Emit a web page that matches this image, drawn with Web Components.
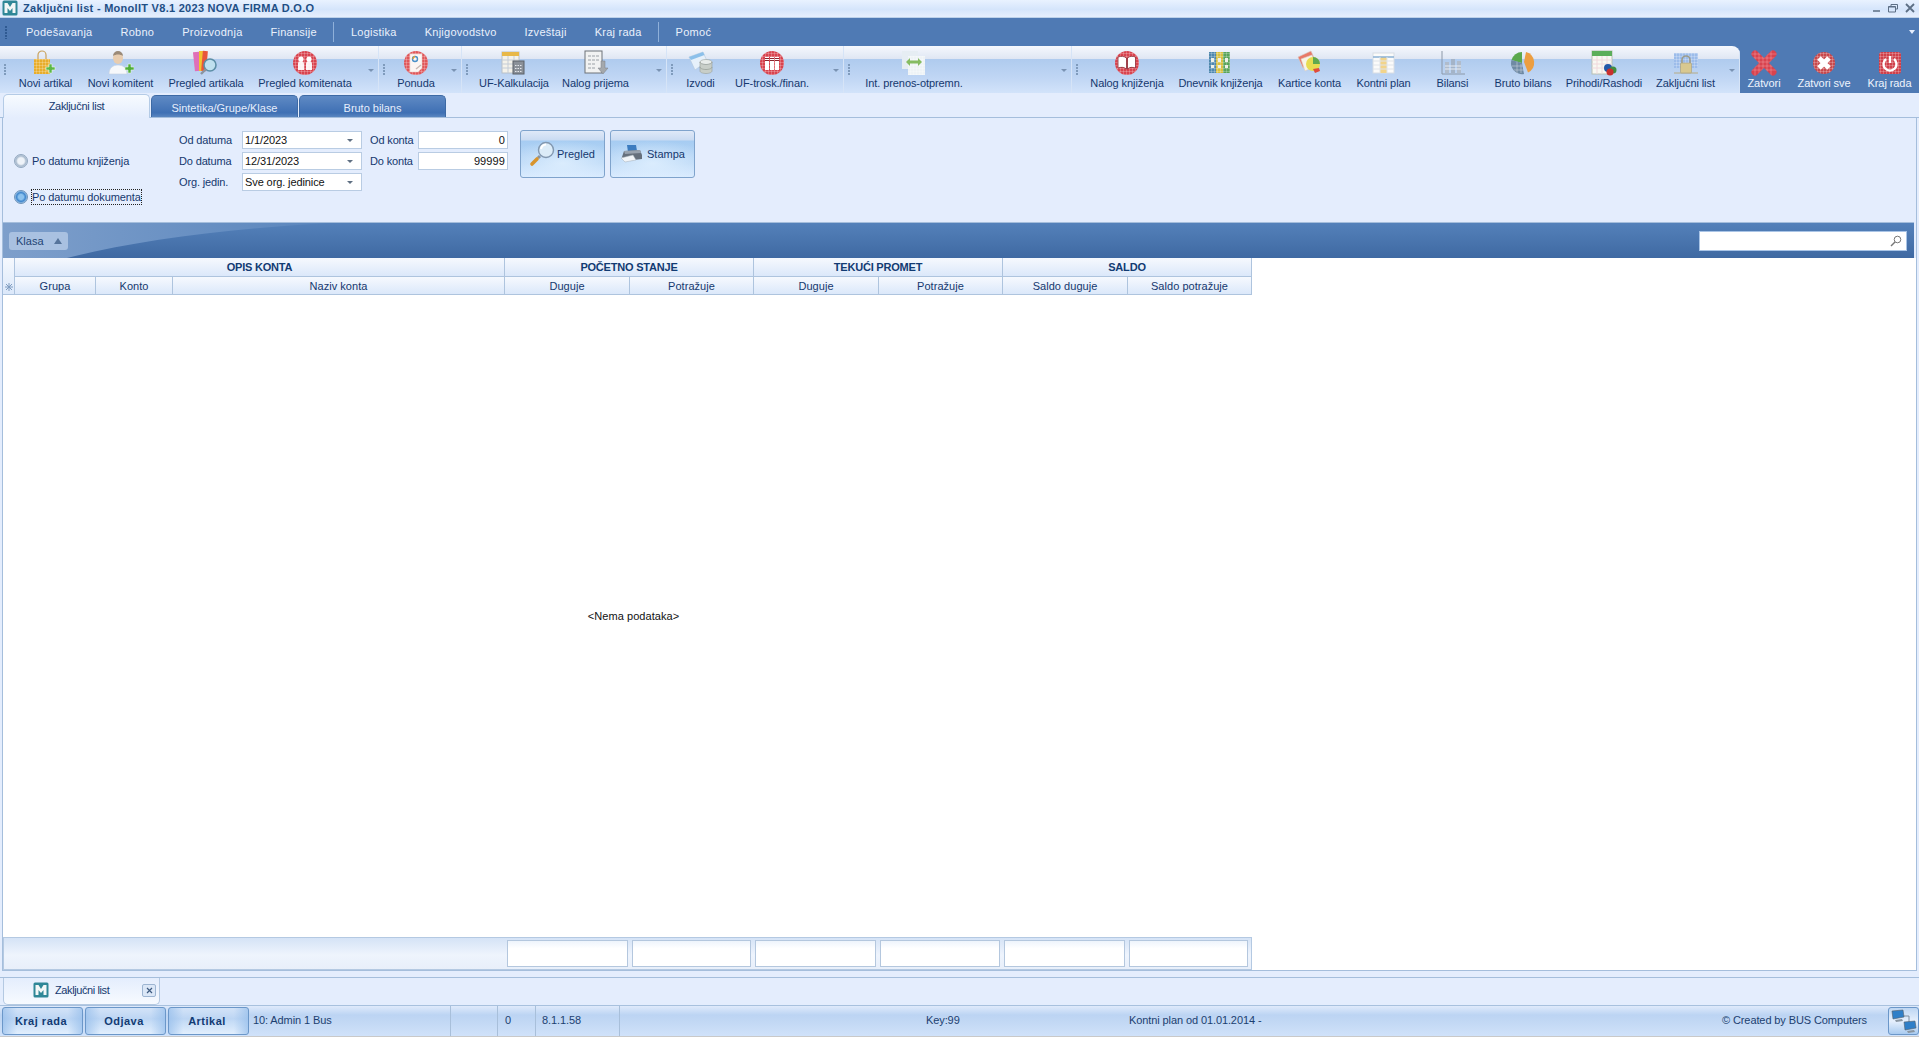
<!doctype html>
<html>
<head>
<meta charset="utf-8">
<title>Zaključni list</title>
<style>
  html, body { margin: 0; padding: 0; background: #e4edfd; overflow: hidden; }
  body { font: 11px "Liberation Sans", Arial, sans-serif; color: #15386e; }
</style>
</head>
<body>
<mono-app>
  <title-bar>Zaključni list - MonolIT V8.1 2023 NOVA FIRMA D.O.O</title-bar>
  <menu-bar>
    <menu-item>Podešavanja</menu-item>
    <menu-item>Robno</menu-item>
    <menu-item>Proizvodnja</menu-item>
    <menu-item sep>Finansije</menu-item>
    <menu-item>Logistika</menu-item>
    <menu-item>Knjigovodstvo</menu-item>
    <menu-item>Izveštaji</menu-item>
    <menu-item sep>Kraj rada</menu-item>
    <menu-item>Pomoć</menu-item>
  </menu-bar>
  <tool-bar>
    <tool-group w="379" first>
      <tool-item w="69" icon="bag">Novi artikal</tool-item>
      <tool-item w="81" icon="user">Novi komitent</tool-item>
      <tool-item w="90" icon="books">Pregled artikala</tool-item>
      <tool-item w="108" icon="people">Pregled komitenata</tool-item>
    </tool-group>
    <tool-group w="83">
      <tool-item w="52" icon="offer">Ponuda</tool-item>
    </tool-group>
    <tool-group w="205">
      <tool-item w="82" icon="calc">UF-Kalkulacija</tool-item>
      <tool-item w="81" icon="receipt">Nalog prijema</tool-item>
    </tool-group>
    <tool-group w="177">
      <tool-item w="45" icon="db">Izvodi</tool-item>
      <tool-item w="98" icon="binders">UF-trosk./finan.</tool-item>
    </tool-group>
    <tool-group w="228">
      <tool-item w="118" icon="transfer">Int. prenos-otpremn.</tool-item>
    </tool-group>
    <tool-group w="668">
      <tool-item w="88" icon="book">Nalog knjiženja</tool-item>
      <tool-item w="99" icon="journal">Dnevnik knjiženja</tool-item>
      <tool-item w="79" icon="cards">Kartice konta</tool-item>
      <tool-item w="69" icon="plan">Kontni plan</tool-item>
      <tool-item w="69" icon="bars">Bilansi</tool-item>
      <tool-item w="72" icon="pie">Bruto bilans</tool-item>
      <tool-item w="90" icon="calendar">Prihodi/Rashodi</tool-item>
      <tool-item w="73" icon="lock">Zaključni list</tool-item>
    </tool-group>
    <tool-item slot="exit" light w="48" icon="close">Zatvori</tool-item>
    <tool-item slot="exit" light w="72" icon="closeall">Zatvori sve</tool-item>
    <tool-item slot="exit" light w="59" icon="power">Kraj rada</tool-item>
  </tool-bar>
  <tab-strip>
    <tab-item active>Zaključni list</tab-item>
    <tab-item>Sintetika/Grupe/Klase</tab-item>
    <tab-item>Bruto bilans</tab-item>
  </tab-strip>
  <content-panel>
    <filter-form>
      <radio-option slot="radios">Po datumu knjiženja</radio-option>
      <radio-option slot="radios" checked>Po datumu dokumenta</radio-option>
      <field-label>Od datuma</field-label>
      <combo-box>1/1/2023</combo-box>
      <field-label inset>Od konta</field-label>
      <num-input>0</num-input>
      <field-label>Do datuma</field-label>
      <combo-box>12/31/2023</combo-box>
      <field-label inset>Do konta</field-label>
      <num-input>99999</num-input>
      <field-label>Org. jedin.</field-label>
      <combo-box>Sve org. jedinice</combo-box>
      <big-button slot="buttons" icon="lens">Pregled</big-button>
      <big-button slot="buttons" icon="printer">Stampa</big-button>
    </filter-form>
    <group-band>Klasa</group-band>
    <data-grid empty="<Nema podataka>"></data-grid>
  </content-panel>
  <doc-tabs>Zaključni list</doc-tabs>
  <status-bar>
    <status-button>Kraj rada</status-button>
    <status-button>Odjava</status-button>
    <status-button>Artikal</status-button>
    <status-cell w="200" pad="2" line>10: Admin 1 Bus</status-cell>
    <status-cell w="47" line></status-cell>
    <status-cell w="38" pad="7" line>0</status-cell>
    <status-cell w="84" pad="6" line>8.1.1.58</status-cell>
    <status-cell w="509" pad="306">Key:99</status-cell>
    <status-cell w="593">Kontni plan od 01.01.2014 -</status-cell>
    <status-cell w="166">© Created by BUS Computers</status-cell>
    <net-button></net-button>
  </status-bar>
</mono-app>

<script>
const grid = `<defs><pattern id="g" width="3" height="3" patternUnits="userSpaceOnUse"><path d="M0 .5H3M.5 0V3" stroke="#fff" stroke-opacity=".22" fill="none"/></pattern></defs>`;
const red = (inner) => `${grid}<circle cx="13" cy="13" r="12" fill="#d8434e"/><circle cx="13" cy="13" r="12" fill="url(#g)"/>${inner}`;
const plus = `<path d="M20 14h3v3h3v3h-3v3h-3v-3h-3v-3h3z" fill="#4fae3a" stroke="#e9f5e2" stroke-width=".6"/>`;

const ICONS = {
  bag: `${grid}<path d="M5 9V5a4 4 0 0 1 8 0v4" fill="none" stroke="#c9a25c" stroke-width="1.2"/><rect x="1" y="9" width="16" height="15" fill="#e8ad2c"/><rect x="1" y="9" width="16" height="15" fill="url(#g)"/><path d="M15 17h3v3h3v3h-3v3h-3v-3h-3v-3h3z" transform="translate(1 -3)" fill="#5cb848" stroke="#e9f5e2" stroke-width=".6"/>`,
  user: `<ellipse cx="10" cy="8" rx="5" ry="6" fill="#e8cdb0"/><path d="M5 6a5 5 0 0 1 10 0c-3-2-7-2-10 0z" fill="#9b8a78"/><path d="M1 24c0-6 4-9 9-9s9 3 9 9z" fill="#f6f8fb" stroke="#c6d2e0" stroke-width=".6"/>${plus}`,
  books: `<rect x="1" y="2" width="6" height="19" fill="#e070b8" transform="rotate(-6 4 12)"/><rect x="6" y="1" width="4" height="20" fill="#f2c230"/><rect x="9" y="1" width="5" height="20" fill="#e8553c" transform="rotate(5 11 11)"/><circle cx="17" cy="15" r="6" fill="#bfe0ef" stroke="#5c8ea6" stroke-width="1.6"/><path d="M13 19l-5 5" stroke="#8a94a0" stroke-width="2.4"/>`,
  people: red(`<circle cx="9" cy="9" r="2.6" fill="#fff"/><circle cx="17" cy="9" r="2.6" fill="#fff"/><path d="M6 20v-6a3 3 0 0 1 6 0v6zM14 20v-6a3 3 0 0 1 6 0v6z" fill="#fff" opacity=".92"/>`),
  offer: `${grid}<circle cx="13" cy="13" r="12" fill="#e0575a"/><circle cx="13" cy="13" r="12" fill="url(#g)"/><path d="M7 4h12v14l-4 4H7z" fill="#fdf6f3" stroke="#e2c9c4" stroke-width=".5"/><circle cx="12" cy="9" r="2.5" fill="none" stroke="#4a90c8" stroke-width="1.4"/><path d="M10 9a2.5 2.5 0 0 1 2-2.5" stroke="#e8a030" stroke-width="1.4" fill="none"/><path d="M13 19l5-4" stroke="#c9b8b4" stroke-width="1.4"/>`,
  calc: `<rect x="1" y="2" width="17" height="21" fill="#f4f2ea" stroke="#b8c0c8"/><rect x="1" y="2" width="17" height="4" fill="#e8b848"/><path d="M1 10h17M1 14h17M1 18h17M7 6v17M13 6v17" stroke="#c4ccd6"/><rect x="12" y="11" width="11" height="13" fill="#8a9098" stroke="#5a6068"/><path d="M14 15.500h7M14 18.500h7M14 21.500h7" stroke="#e4e6ea" stroke-dasharray="1.500 1"/>`,
  receipt: `<rect x="2" y="1" width="17" height="22" fill="#f1f2f2" stroke="#6c7278"/><path d="M5 6h11M5 10h11M5 14h7M5 18h7" stroke="#9aa0a6" stroke-dasharray="3 1"/><path d="M18 11h4v7h3l-5 6-5-6h3z" fill="#a4a8ac" stroke="#7a7e84" stroke-width=".5"/>`,
  db: `<path d="M1 7l14-5 4 9-12 9z" fill="#e6f0fa" stroke="#b4c8dc" stroke-width=".6"/><path d="M1 7l14-5 1.500 3L3 10z" fill="#8cc0ea"/><ellipse cx="18" cy="12" rx="6" ry="2.500" fill="#e8ecea" stroke="#98a098" stroke-width=".6"/><path d="M12 12v9c0 1.500 2.700 2.500 6 2.500s6-1 6-2.500v-9c0 1.500-2.700 2.500-6 2.500s-6-1-6-2.500z" fill="#c8cec8" stroke="#98a098" stroke-width=".6"/><path d="M12 17c0 1.500 2.700 2.500 6 2.500s6-1 6-2.500" fill="none" stroke="#8a928a" stroke-width=".6"/>`,
  binders: red(`<rect x="6" y="7" width="4" height="13" fill="#fff"/><rect x="11" y="7" width="4" height="13" fill="#fff"/><rect x="16" y="7" width="4" height="13" fill="#fff"/><path d="M6 8.500h4M11 8.500h4M16 8.500h4M6 10.500h4M11 10.500h4M16 10.500h4" stroke="#8a2630"/>`),
  transfer: `${grid}<rect x="1" y="1" width="16" height="18" fill="#e6edf3"/><rect x="7" y="6" width="17" height="19" fill="#eef3f6"/><rect x="7" y="6" width="17" height="19" fill="url(#g)"/><path d="M5 12l4-4v2.500h8V8l4 4-4 4v-2.500H9V16z" fill="#86bc62"/>`,
  book: red(`<path d="M4 7c3-1 6-1 8.500 1v11C10 17 7 17 4 18zM21.500 7c-3-1-6-1-8 1v11c2-2 5-2 8-1z" fill="#fff" stroke="#8a2630" stroke-width=".8"/>`),
  journal: `${grid}<rect x="1" y="2" width="7" height="21" fill="#4f88ae"/><rect x="8" y="2" width="7" height="21" fill="#d8c040"/><rect x="15" y="2" width="7" height="21" fill="#5aa45a"/><rect x="1" y="2" width="21" height="21" fill="url(#g)"/><path d="M3 8h3v4H3zM10 8h3v4h-3zM17 8h3v4h-3zM3 15h3v3H3zM10 15h3v3h-3zM17 15h3v3h-3z" fill="#eef0e8"/>`,
  cards: `<path d="M1 7l13-6 5 11-13 6z" fill="#e87868" stroke="#d8ccc4" stroke-width=".6"/><path d="M4 9l11-4 4 11-11 5z" fill="#f8f4e6" stroke="#d8ccc4" stroke-width=".6"/><circle cx="16" cy="14" r="7" fill="#e8dc50"/><path d="M16 14V7a7 7 0 0 1 7 7z" fill="#60a850"/><path d="M16 19l6-1 1 3-5 2z" fill="#e04c3c"/>`,
  plan: `<rect x="2" y="3" width="21" height="20" fill="#fbfbfa" stroke="#d8dde4"/><rect x="9" y="7" width="7" height="16" fill="#f2d48a"/><path d="M2 7h21" stroke="#8ab0d4" stroke-width="1.500"/><path d="M2 11h21M2 15h21M2 19h21M9 7v16M16 7v16" stroke="#dfe4ea"/>`,
  bars: `<path d="M2 1v23h23" fill="none" stroke="#8c98a8"/><rect x="5" y="12" width="4" height="11" fill="#b0bccc"/><rect x="11" y="9" width="4" height="14" fill="#a4b4c8"/><rect x="17" y="11" width="4" height="12" fill="#b0bccc"/><path d="M5 16h16M5 19h16" stroke="#e6ecf4"/>`,
  pie: `<path d="M12 13V2A11 11 0 0 0 1.500 10z" fill="#5aa84c"/><path d="M12 13L1.500 10A11 11 0 0 0 14 24z" fill="#6f8aa4"/><path d="M14 12l2-10a11 11 0 0 1 2 20.500z" fill="#ec9e40"/><path d="M2 16h11M4 20h10M7 12v11M11 14v9" stroke="#c8d2dc" stroke-width=".6"/>`,
  calendar: `<rect x="1" y="1" width="20" height="23" fill="#f8f8f2" stroke="#b8c0b4"/><rect x="1" y="1" width="20" height="5" fill="#5cae5a"/><path d="M1 10h20M1 14h20M1 18h20M6 6v18M11 6v18M16 6v18" stroke="#f0d8dc"/><circle cx="17" cy="18" r="4" fill="#2458a8"/><circle cx="22" cy="20" r="3.500" fill="#408c40"/><circle cx="19" cy="22" r="3.500" fill="#c83030"/>`,
  lock: `${grid}<rect x="1" y="3" width="24" height="15" fill="#9cbcea"/><rect x="1" y="3" width="24" height="15" fill="url(#g)"/><path d="M1 23h24" stroke="#b8b8a8" stroke-width="1.500"/><path d="M9 13V10a4 4 0 0 1 8 0v3" fill="none" stroke="#9c9c8c" stroke-width="1.600"/><rect x="7.500" y="13" width="11" height="10" rx="1" fill="#d8c890" stroke="#a49c78" stroke-width=".6"/>`,
  close: `<defs><mask id="m"><path d="M4 4l18 18M22 4L4 22" stroke="#fff" stroke-width="7" stroke-linecap="round"/></mask></defs><path d="M4 4l18 18M22 4L4 22" stroke="#d8434e" stroke-width="7" stroke-linecap="round"/><g mask="url(#m)"><path d="M0 4h26M0 8h26M0 12h26M0 16h26M0 20h26M4 0v26M8 0v26M12 0v26M16 0v26M20 0v26" stroke="#f4b0b6" stroke-opacity=".4"/></g>`,
  closeall: `${grid}<circle cx="13" cy="13" r="11" fill="#c8484c"/><circle cx="13" cy="13" r="11" fill="url(#g)"/><path d="M8 8l10 10M18 8L8 18" stroke="#fff" stroke-width="5"/>`,
  power: `${grid}<rect x="2" y="2" width="22" height="22" rx="3" fill="#d0404a"/><rect x="2" y="2" width="22" height="22" rx="3" fill="url(#g)"/><path d="M9 9a6.500 6.500 0 1 0 8 0" fill="none" stroke="#fff" stroke-width="2.400"/><path d="M13 6v7" stroke="#fff" stroke-width="2.400"/>`,
  lens: `<circle cx="17" cy="9" r="7.500" fill="#dcecf8" stroke="#8298b0" stroke-width="1.400"/><path d="M12 8a5.500 5.500 0 0 1 5-4.500" stroke="#fff" stroke-width="2" fill="none"/><path d="M11 15l-2 2" stroke="#8c949c" stroke-width="3"/><path d="M8 18l-5 5" stroke="#d8942c" stroke-width="3.600" stroke-linecap="round"/>`,
  printer: `<path d="M8 4h9l1 6-9 1z" fill="#3c7cc0"/><path d="M5 10l16-1 2 5v4L6 20l-3-4z" fill="#66707c"/><path d="M5 10l16-1 1 3-16 1z" fill="#98a2ae"/><path d="M2 17l12-3 3 5-11 2z" fill="#f2f5f8" stroke="#a4aeb8" stroke-width=".5"/>`,
  logo: `<rect x=".5" y=".5" width="15" height="15" rx="1.500" fill="#2f8797"/><path d="M2.500 13V3h3l2.500 4 2.500-4h3v10h-3V8L8 11 5.500 8v5z" fill="#f3f7f7"/>`,
};

class MonoApp extends HTMLElement {
  constructor() {
    super();
    this.attachShadow({ mode: "open" }).innerHTML = `
      <style>:host { display: flex; flex-direction: column; width: 1919px; height: 1037px; overflow: hidden; background: #e4edfd; }</style>
      <slot></slot>`;
  }
}

class TitleBar extends HTMLElement {
  constructor() {
    super();
    this.attachShadow({ mode: "open" }).innerHTML = `
      <style>
        :host { display: flex; align-items: center; height: 18px; flex: none; box-sizing: border-box; padding: 0 4px 1px 2px;
          background: linear-gradient(#e9f2ff, #d5e5fb 55%, #e6effd); border-bottom: 1px solid #bcd1ea; }
        svg { display: block; margin-right: 5px; }
        .t { flex: 1; font-weight: bold; font-size: 11px; color: #1f4f85; letter-spacing: .28px; }
        .c { display: flex; gap: 7px; color: #5d6f85; align-items: center; }
      </style>
      <svg width="16" height="16" viewBox="0 0 16 16">${ICONS.logo}</svg>
      <div class="t"><slot></slot></div>
      <div class="c">
        <svg style="margin:0" width="9" height="9" viewBox="0 0 9 9"><path d="M1 7h7" stroke="#5d6f85" stroke-width="1.500"/></svg>
        <svg style="margin:0" width="10" height="9" viewBox="0 0 10 9"><path d="M3 2V.5h6.500V5H8M.5 2.500h7V8H.5z M.5 3h7" fill="none" stroke="#5d6f85"/></svg>
        <svg style="margin:0" width="10" height="10" viewBox="0 0 10 10"><path d="M1 1l8 8M9 1L1 9" stroke="#5d6f85" stroke-width="1.800"/></svg>
      </div>`;
  }
}

class MenuBar extends HTMLElement {
  constructor() {
    super();
    this.attachShadow({ mode: "open" }).innerHTML = `
      <style>
        :host { position: relative; display: flex; align-items: center; height: 28px; flex: none; box-sizing: border-box; padding-left: 12px; background: #4f7ab4; }
        .grip { position: absolute; left: 5px; top: 8px; width: 2px; height: 13px; background: radial-gradient(circle at 1px 1px, #2f5a92 1px, transparent 1px) 0 0 / 2px 3px; }
        .more { position: absolute; right: 4px; top: 12px; border: 3px solid transparent; border-top: 4px solid #e4edfd; border-bottom: 0; }
      </style>
      <span class="grip"></span><slot></slot><span class="more"></span>`;
  }
}

class MenuItem extends HTMLElement {
  constructor() {
    super();
    this.attachShadow({ mode: "open" }).innerHTML = `
      <style>
        :host { display: flex; align-items: center; height: 100%; padding: 0 14px; color: #eaf1fc; letter-spacing: .26px; white-space: nowrap; }
        :host([sep]) { margin-right: 3px; padding-right: 17px; background: linear-gradient(#8fb0d9, #8fb0d9) right 4px / 1px 20px no-repeat; }
      </style><slot></slot>`;
  }
}

class ToolBar extends HTMLElement {
  constructor() {
    super();
    this.attachShadow({ mode: "open" }).innerHTML = `
      <style>
        :host { display: flex; height: 47px; flex: none; background: #4f7ab4; }
        .main { display: flex; width: 1740px; border-radius: 0 8px 0 0; overflow: hidden;
          background: linear-gradient(#f5f8fd, #dfe6f3 13px, #afcbee 13px, #c0d6f4 32px, #d2e3fa); }
        .exit { display: flex; }
      </style>
      <div class="main"><slot></slot></div>
      <div class="exit"><slot name="exit"></slot></div>`;
  }
}

class ToolGroup extends HTMLElement {
  constructor() {
    super();
    this.attachShadow({ mode: "open" }).innerHTML = `
      <style>
        :host { position: relative; display: flex; flex: none; box-sizing: border-box; padding-left: 11px; height: 100%; border-right: 1px solid #d6e4f7; }
        .grip { position: absolute; left: 4px; top: 18px; width: 2px; height: 12px; background: radial-gradient(circle at 1px 1px, #7f9bbc 1px, transparent 1px) 0 0 / 2px 3px; }
        .chev { position: absolute; right: 4px; top: 23px; border: 3px solid transparent; border-top: 3px solid #7a93b3; border-bottom: 0; }
      </style>
      <span class="grip"></span><slot></slot><span class="chev"></span>`;
    this.style.width = this.getAttribute("w") + "px";
  }
}

class ToolItem extends HTMLElement {
  constructor() {
    super();
    const svg = ICONS[this.getAttribute("icon")];
    this.attachShadow({ mode: "open" }).innerHTML = `
      <style>
        :host { display: flex; flex-direction: column; align-items: center; flex: none; height: 47px; box-sizing: border-box; padding-top: 4px; white-space: nowrap; color: #15386e; letter-spacing: -.08px; }
        :host([light]) { color: #eef4fd; }
        svg { display: block; margin-bottom: 1px; }
      </style>
      <svg width="26" height="26" viewBox="0 0 26 26">${svg}</svg>
      <slot></slot>`;
    this.style.width = this.getAttribute("w") + "px";
  }
}

class TabStrip extends HTMLElement {
  constructor() {
    super();
    this.attachShadow({ mode: "open" }).innerHTML = `
      <style>:host { display: flex; align-items: flex-end; gap: 1px; height: 25px; flex: none; box-sizing: border-box; padding-left: 3px; border-bottom: 1px solid #a5bedc; }</style>
      <slot></slot>`;
  }
}

class TabItem extends HTMLElement {
  constructor() {
    super();
    this.attachShadow({ mode: "open" }).innerHTML = `
      <style>
        :host { display: flex; align-items: center; justify-content: center; width: 147px; height: 22px; box-sizing: border-box; padding-top: 2px;
          border: 1px solid #3d6aa5; border-bottom: 0; border-radius: 5px 5px 0 0; color: #e6eefc; letter-spacing: -.02px;
          background: linear-gradient(#5f8ac4, #3f70b4 80%, #5a86c0); }
        :host([active]) { height: 24px; margin-bottom: -1px; color: #15386e; border-color: #b4cbe6; background: linear-gradient(#f7fbff, #e4edfd); padding: 0 0 2px; letter-spacing: -.3px; }
      </style><slot></slot>`;
  }
}

class ContentPanel extends HTMLElement {
  constructor() {
    super();
    this.attachShadow({ mode: "open" }).innerHTML = `
      <style>:host { display: flex; flex-direction: column; height: 853px; flex: none; box-sizing: border-box; margin: 0 2px; border: 1px solid #a5bedc; border-top: 0; }</style>
      <slot></slot>`;
  }
}

class FilterForm extends HTMLElement {
  constructor() {
    super();
    this.attachShadow({ mode: "open" }).innerHTML = `
      <style>
        :host { display: flex; height: 104px; flex: none; box-sizing: border-box; }
        .radios { width: 176px; box-sizing: border-box; padding: 35px 0 0 11px; display: flex; flex-direction: column; gap: 20px; }
        .fields { display: grid; grid-template-columns: 63px 120px 56px 90px; grid-auto-rows: 18px; row-gap: 3px; padding-top: 13px; align-content: start; }
        .buttons { display: flex; gap: 5px; margin-left: 12px; padding-top: 12px; align-items: flex-start; }
      </style>
      <div class="radios"><slot name="radios"></slot></div>
      <div class="fields"><slot></slot></div>
      <div class="buttons"><slot name="buttons"></slot></div>`;
  }
}

class RadioOption extends HTMLElement {
  constructor() {
    super();
    this.attachShadow({ mode: "open" }).innerHTML = `
      <style>
        :host { display: flex; align-items: center; height: 16px; gap: 4px; white-space: nowrap; letter-spacing: -.1px; }
        i { width: 14px; height: 14px; border-radius: 50%; box-sizing: border-box; border: 1px solid #92a8c0; background: radial-gradient(#eef3f9 38%, #a8bace 60%, #dfe7f1 85%); }
        :host([checked]) i { background: radial-gradient(#8cc2ee 30%, #3f86cc 52%, #b7d6f2 78%); border-color: #6f93b8; }
        span { display: block; padding: 1px 0; }
        :host([checked]) span { outline: 1px dotted #222; outline-offset: 0; }
      </style>
      <i></i><span><slot></slot></span>`;
  }
}

class FieldLabel extends HTMLElement {
  constructor() {
    super();
    this.attachShadow({ mode: "open" }).innerHTML = `
      <style>
        :host { display: flex; align-items: center; white-space: nowrap; letter-spacing: -.15px; }
        :host([inset]) { padding-left: 8px; }
      </style><slot></slot>`;
  }
}

class ComboBox extends HTMLElement {
  constructor() {
    super();
    this.attachShadow({ mode: "open" }).innerHTML = `
      <style>
        :host { display: flex; align-items: center; box-sizing: border-box; padding-left: 2px; background: #fff; border: 1px solid #b9cce3; position: relative; color: #111; white-space: nowrap; letter-spacing: -.1px; }
        i { position: absolute; right: 8px; top: 7px; border: 3px solid transparent; border-top: 3px solid #5f6f82; border-bottom: 0; }
      </style><slot></slot><i></i>`;
  }
}

class NumInput extends HTMLElement {
  constructor() {
    super();
    this.attachShadow({ mode: "open" }).innerHTML = `
      <style>:host { display: flex; align-items: center; justify-content: flex-end; box-sizing: border-box; padding-right: 2px; background: #fff; border: 1px solid #b9cce3; color: #111; letter-spacing: .1px; }</style><slot></slot>`;
  }
}

class BigButton extends HTMLElement {
  constructor() {
    super();
    this.attachShadow({ mode: "open" }).innerHTML = `
      <style>
        :host { display: flex; align-items: center; gap: 2px; box-sizing: border-box; width: 85px; height: 48px; padding: 0 0 0 8px; border: 1px solid #7fa3cc; border-radius: 3px;
          background: radial-gradient(ellipse 70% 50% at 50% 70%, rgba(226,241,255,.8), rgba(226,241,255,0)),
            linear-gradient(#dfe9f8, #cadbf2 9px, #a6ccf2 10px, #bcd9f7 70%, #d9ebff); }
        svg { display: block; }
        span { margin-bottom: 1px; }
      </style>
      <svg width="26" height="26" viewBox="0 0 26 26">${ICONS[this.getAttribute("icon")]}</svg>
      <span><slot></slot></span>`;
  }
}

class GroupBand extends HTMLElement {
  constructor() {
    super();
    this.attachShadow({ mode: "open" }).innerHTML = `
      <style>
        :host { position: relative; display: flex; align-items: center; justify-content: space-between; height: 36px; flex: none; box-sizing: border-box; padding: 0 7px 0 6px; margin-right: 2px; overflow: hidden;
          border-top: 1px solid #a5bedc; background: linear-gradient(#5481ba, #3f69a2); }
        svg.sw { position: absolute; left: 0; top: 0; }
        .chip { position: relative; display: flex; align-items: center; gap: 10px; width: 59px; height: 18px; box-sizing: border-box; padding-left: 7px; border-radius: 3px; background: #a9c1e1; color: #1f4474; }
        .chip i { border: 4px solid transparent; border-bottom: 6px solid #56749b; border-top: 0; }
        .search { position: relative; display: flex; align-items: center; justify-content: flex-end; width: 208px; height: 20px; box-sizing: border-box; padding-right: 4px; background: #fff; border: 1px solid #a9c4e6; }
      </style>
      <svg class="sw" width="340" height="36" viewBox="0 0 340 36"><defs><linearGradient id="s" x1="0" x2="1"><stop offset="0" stop-color="#7e9fcb"/><stop offset="1" stop-color="#5a86bd"/></linearGradient></defs><path d="M0 0H325C220 6 130 18 60 36H0z" fill="url(#s)"/></svg>
      <div class="chip"><slot></slot><i></i></div>
      <div class="search"><svg width="12" height="12" viewBox="0 0 12 12"><circle cx="7.500" cy="4.500" r="3.300" fill="none" stroke="#777"/><path d="M5 7l-4 4" stroke="#777" stroke-width="1.400"/></svg></div>`;
  }
}

class DataGrid extends HTMLElement {
  constructor() {
    super();
    const cell = (t, span, bold) => `<div class="h${bold ? " b" : ""}" style="grid-column: span ${span}">${t}</div>`;
    this.attachShadow({ mode: "open" });
    this.shadowRoot.innerHTML = `
      <style>
        :host { display: flex; flex-direction: column; flex: 1; background: #fff; min-height: 0; }
        .head { display: grid; grid-template-columns: 12px 81px 77px 332px 125px 124px 125px 124px 125px 124px; grid-template-rows: 19px 18px; width: 1249px; flex: none; }
        .h { display: flex; align-items: center; justify-content: center; box-sizing: border-box; border-right: 1px solid #aec4de; border-bottom: 1px solid #aec4de; background: linear-gradient(#f6f9fe, #dbe8fa); color: #15386e; letter-spacing: .04px; }
        .b { font-weight: bold; color: #123b73; letter-spacing: -.2px; }
        .ind { grid-row: span 2; background: linear-gradient(#f6f9fe, #dbe8fa); border-right: 1px solid #aec4de; border-bottom: 1px solid #aec4de; display: flex; align-items: flex-end; justify-content: center; padding-bottom: 3px; box-sizing: border-box; }
        .body { flex: 1; display: flex; align-items: center; justify-content: center; width: 1237px; margin-left: 12px; color: #111; letter-spacing: .05px; }
        .foot { display: flex; gap: 4px; height: 33px; flex: none; width: 1249px; box-sizing: border-box; padding: 2px 0 0 503px; border: 1px solid #b4c9e2; background: linear-gradient(#d5e3f6, #eef4fd 55%, #e8effa); }
        .foot div { width: 120px; height: 27px; box-sizing: border-box; border: 1px solid #b4c7de; background: linear-gradient(#eef4fc, #fff 30%); }
        .foot div:nth-child(odd) { width: 121px; }
        .foot div:nth-child(2), .foot div:nth-child(6) { width: 119px; }
      </style>
      <div class="head">
        <div class="ind"><svg width="8" height="8" viewBox="0 0 8 8"><path d="M4 0v8M0 4h8M1 1l6 6M7 1L1 7" stroke="#7f9cc0"/></svg></div>
        ${cell("OPIS KONTA", 3, true)}${cell("POČETNO STANJE", 2, true)}${cell("TEKUĆI PROMET", 2, true)}${cell("SALDO", 2, true)}
        ${cell("Grupa", 1)}${cell("Konto", 1)}${cell("Naziv konta", 1)}${cell("Duguje", 1)}${cell("Potražuje", 1)}${cell("Duguje", 1)}${cell("Potražuje", 1)}${cell("Saldo duguje", 1)}${cell("Saldo potražuje", 1)}
      </div>
      <div class="body"></div>
      <div class="foot"><div></div><div></div><div></div><div></div><div></div><div></div></div>`;
    this.shadowRoot.querySelector(".body").textContent = this.getAttribute("empty");
  }
}

class DocTabs extends HTMLElement {
  constructor() {
    super();
    this.attachShadow({ mode: "open" }).innerHTML = `
      <style>
        :host { display: flex; height: 28px; flex: none; margin-top: 6px; box-sizing: border-box; padding-left: 3px; border-top: 1px solid #a5bedc; letter-spacing: -.4px; }
        .tab { display: flex; align-items: center; width: 157px; height: 27px; box-sizing: border-box; padding: 0 0 2px 29px; border: 1px solid #b4c9e2; border-top: 0; border-radius: 0 0 5px 5px; background: linear-gradient(#e4edfd, #f7faff); }
        svg { display: block; margin-right: 6px; }
        .x { display: flex; align-items: center; justify-content: center; width: 14px; height: 13px; margin-left: auto; margin-right: 3px; box-sizing: border-box; border: 1px solid #9db5d2; border-radius: 2px; background: #dbe7f7; }
        .x svg { margin: 0; }
      </style>
      <div class="tab">
        <svg width="16" height="16" viewBox="0 0 16 16">${ICONS.logo}</svg>
        <slot></slot>
        <span class="x"><svg width="7" height="7" viewBox="0 0 7 7"><path d="M1 1l5 5M6 1L1 6" stroke="#3d5a80" stroke-width="1.200"/></svg></span>
      </div>`;
  }
}

class StatusBar extends HTMLElement {
  constructor() {
    super();
    this.attachShadow({ mode: "open" }).innerHTML = `
      <style>
        :host { display: flex; height: 32px; flex: none; box-sizing: border-box; padding-left: 2px; border-top: 1px solid #a8c1de; border-bottom: 1px solid #c9c9c9;
          background: linear-gradient(#dfeafb, #bcd4f3 9px, #c2d8f4 16px, #d0e2fa); }
      </style><slot></slot>`;
  }
}

class StatusButton extends HTMLElement {
  constructor() {
    super();
    this.attachShadow({ mode: "open" }).innerHTML = `
      <style>
        :host { display: flex; align-items: center; justify-content: center; width: 81px; height: 28px; margin: 1px 2px 0 0; padding-right: 3px; box-sizing: border-box; border: 1px solid #6b97c9; border-radius: 3px; font-weight: bold; color: #123b73; letter-spacing: .5px;
          background: linear-gradient(90deg, rgba(150,190,235,.7), rgba(150,190,235,0) 18%, rgba(150,190,235,0) 82%, rgba(150,190,235,.7)),
            linear-gradient(#d3e3f8, #bcd5f3 42%, #c4dbf6 50%, #e2effd); }
      </style><slot></slot>`;
  }
}

class StatusCell extends HTMLElement {
  constructor() {
    super();
    this.attachShadow({ mode: "open" }).innerHTML = `
      <style>
        :host { display: flex; align-items: center; flex: none; box-sizing: border-box; white-space: nowrap; letter-spacing: -.1px; color: #1c3f70; padding-bottom: 2px; }
        :host([line]) { border-right: 1px solid #a8bfda; }
      </style><slot></slot>`;
    this.style.width = this.getAttribute("w") + "px";
    if (this.hasAttribute("pad")) this.style.paddingLeft = this.getAttribute("pad") + "px";
  }
}

class NetButton extends HTMLElement {
  constructor() {
    super();
    this.attachShadow({ mode: "open" }).innerHTML = `
      <style>
        :host { display: flex; align-items: center; justify-content: center; width: 31px; height: 28px; margin-top: 1px; box-sizing: border-box; border: 1px solid #6b97c9; border-radius: 3px; background: linear-gradient(#bdd6f3, #e6f0fd 50%, #a9cbf0); }
      </style>
      <svg width="26" height="24" viewBox="0 0 26 24">
        <path d="M9 7h9v7" fill="none" stroke="#7f8fa0"/>
        <path d="M1 2l11-1 1 7-11 2z" fill="#2f7fc8" stroke="#54606c" stroke-width=".6"/>
        <path d="M4 11l7-1 1 2-7 1z" fill="#8a96a2"/>
        <path d="M13 13l11-1 1 7-11 2z" fill="#2f7fc8" stroke="#54606c" stroke-width=".6"/>
        <path d="M16 22l7-1 1 2-7 1z" fill="#8a96a2"/>
      </svg>`;
  }
}

customElements.define("mono-app", MonoApp);
customElements.define("title-bar", TitleBar);
customElements.define("menu-bar", MenuBar);
customElements.define("menu-item", MenuItem);
customElements.define("tool-bar", ToolBar);
customElements.define("tool-group", ToolGroup);
customElements.define("tool-item", ToolItem);
customElements.define("tab-strip", TabStrip);
customElements.define("tab-item", TabItem);
customElements.define("content-panel", ContentPanel);
customElements.define("filter-form", FilterForm);
customElements.define("radio-option", RadioOption);
customElements.define("field-label", FieldLabel);
customElements.define("combo-box", ComboBox);
customElements.define("num-input", NumInput);
customElements.define("big-button", BigButton);
customElements.define("group-band", GroupBand);
customElements.define("data-grid", DataGrid);
customElements.define("doc-tabs", DocTabs);
customElements.define("status-bar", StatusBar);
customElements.define("status-button", StatusButton);
customElements.define("status-cell", StatusCell);
customElements.define("net-button", NetButton);
</script>
</body>
</html>
